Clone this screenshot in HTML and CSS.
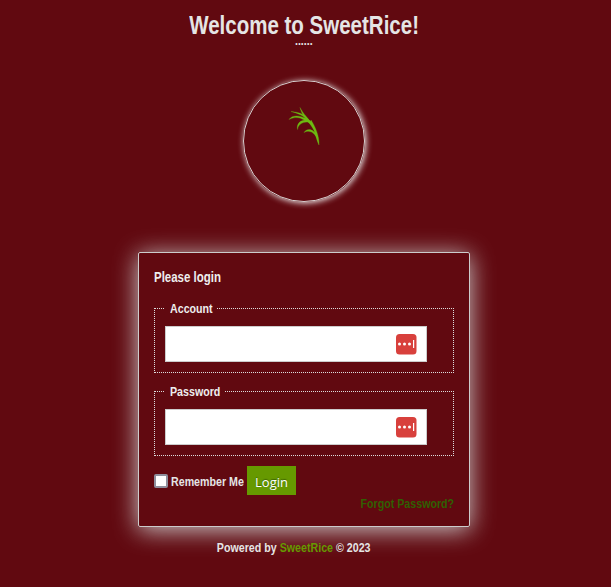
FILE: index.html
```html
<!DOCTYPE html>
<html lang="en">
<head>
<meta charset="utf-8">
<title>SweetRice</title>
<link rel="stylesheet" href="styles.css">
</head>
<body>
<main class="page">
  <h1 class="title"><span class="narrow">Welcome to SweetRice!</span></h1>
  <div class="dots"><span class="narrow">......</span></div>
  <div class="logo">
    <svg width="40" height="50" viewBox="284 100 40 50" fill="#6dbb12" stroke="#6dbb12" stroke-width=".3">
      <path d="M319 145C315.500 138 316 132 311 125.500C307.500 120 302 116 300 107.500C303 113 305.500 115.500 309 120L310.500 122L311 120C315 126 319.500 136 319 145Z"/>
      <path d="M312 125C307 114 300 112.500 291 111.500C298 113.500 302 115 306 118.500C299 115 292 115 289 119.500C295 116.500 300 117.500 303 119.500C308 121.500 309 123 312 125Z"/>
      <path d="M310.500 121C302 118 296 123 297.500 129.500C298.500 124 303 121 310.500 122.500Z"/>
      <path d="M318 138C314 128 307 128 304 132.500C309 129.500 314 132 317.500 139Z"/>
    </svg>
  </div>
  <form class="panel">
    <h2 class="heading"><span class="narrow">Please login</span></h2>
    <fieldset class="field">
      <legend class="legend-account"><span class="narrow">Account</span></legend>
      <div class="inputbox"><svg width="22" height="22" viewBox="0 0 22 22"><rect x="1" y="1" width="20.500" height="20.500" rx="3.500" fill="#d8403c"/><g fill="#fff"><circle cx="4.500" cy="11" r="1.500"/><circle cx="9.500" cy="11" r="1.500"/><circle cx="14.500" cy="11" r="1.500"/><path d="M18 7h1.200v8h-1.200z"/></g></svg></div>
    </fieldset>
    <fieldset class="field">
      <legend class="legend-password"><span class="narrow">Password</span></legend>
      <div class="inputbox"><svg width="22" height="22" viewBox="0 0 22 22"><rect x="1" y="1" width="20.500" height="20.500" rx="3.500" fill="#d8403c"/><g fill="#fff"><circle cx="4.500" cy="11" r="1.500"/><circle cx="9.500" cy="11" r="1.500"/><circle cx="14.500" cy="11" r="1.500"/><path d="M18 7h1.200v8h-1.200z"/></g></svg></div>
    </fieldset>
    <div class="actions"><span class="check"></span><span class="remember"><span class="narrow">Remember Me</span></span><button type="button" class="login">Login</button></div>
    <div class="forgot"><span class="narrow">Forgot Password?</span></div>
  </form>
  <footer class="footer"><span class="narrow">Powered by <span class="brand">SweetRice</span> © 2023</span></footer>
</main>
</body>
</html>
```
FILE: styles.css
```css
* { box-sizing: border-box; }
body {
  margin: 0;
  height: 587px;
  overflow: hidden;
  background: #610910;
  color: #e5e5e5;
  font: bold 13px/16px "Liberation Sans", Arial, sans-serif;
  white-space: nowrap;
}
.page { width: 608px; display: flex; flex-direction: column; align-items: center; }
/* Condensed lettering */
.narrow { display: inline-block; transform: scaleX(.82); transform-origin: left center; }
.title { margin: 13px 0 0; font-size: 25px; line-height: 25px; height: 25px; }
.title .narrow, .dots .narrow, .footer .narrow { transform-origin: center; }
.dots { height: 12px; line-height: 12px; margin-top: -1px; }
.dots .narrow { line-height: 8px; vertical-align: top; }
.logo {
  width: 122px;
  height: 122px;
  margin-top: 31px;
  padding: 19px 0 0 40px;
  border: 1px solid #d8d0d0;
  border-radius: 50%;
  box-shadow: 1px 1px 6px #eee;
}
.panel {
  width: 332px;
  height: 275px;
  margin: 50px 0 0;
  padding: 15px;
  border: 1px solid #ccc;
  border-radius: 2px;
  box-shadow: 0 3px 25px #ccc;
}
.heading { margin: 0; font-size: 14px; line-height: 18px; color: #eee; }
.field { width: 300px; height: 72px; margin: 15px 0 0; padding: 0 10px; border: 1px dotted #ddd; }
.field + .field { margin-top: 11px; }
.field legend { padding: 0 5px; height: 14px; color: #eee; }
.legend-account { width: 52px; }
.legend-password { width: 60px; }
.inputbox {
  width: 262px;
  height: 36px;
  margin-top: 11px;
  padding: 6px 9px;
  display: flex;
  justify-content: flex-end;
  background: #fff;
  border: 1px solid #ccc;
}
.actions { display: flex; align-items: center; height: 29px; margin-top: 10px; }
.check { width: 14px; height: 14px; margin-right: 3px; background: #fff; border: 2px solid #8f8f9d; border-radius: 2px; }
.remember { width: 76px; padding-top: 2px; }
.login {
  width: 49px;
  height: 29px;
  padding: 2px 0 0;
  border: 0;
  background: #690;
  color: #fff;
  font: 13px "Open Sans", "Noto Sans", sans-serif;
  text-shadow: 0 -1px 1px #3f6600;
}
.forgot { margin-top: 1px; text-align: right; color: #306002; }
.forgot .narrow { transform-origin: right center; }
.footer { margin: 13px 0 0; padding-right: 20px; }
.brand { color: #690; }
```
